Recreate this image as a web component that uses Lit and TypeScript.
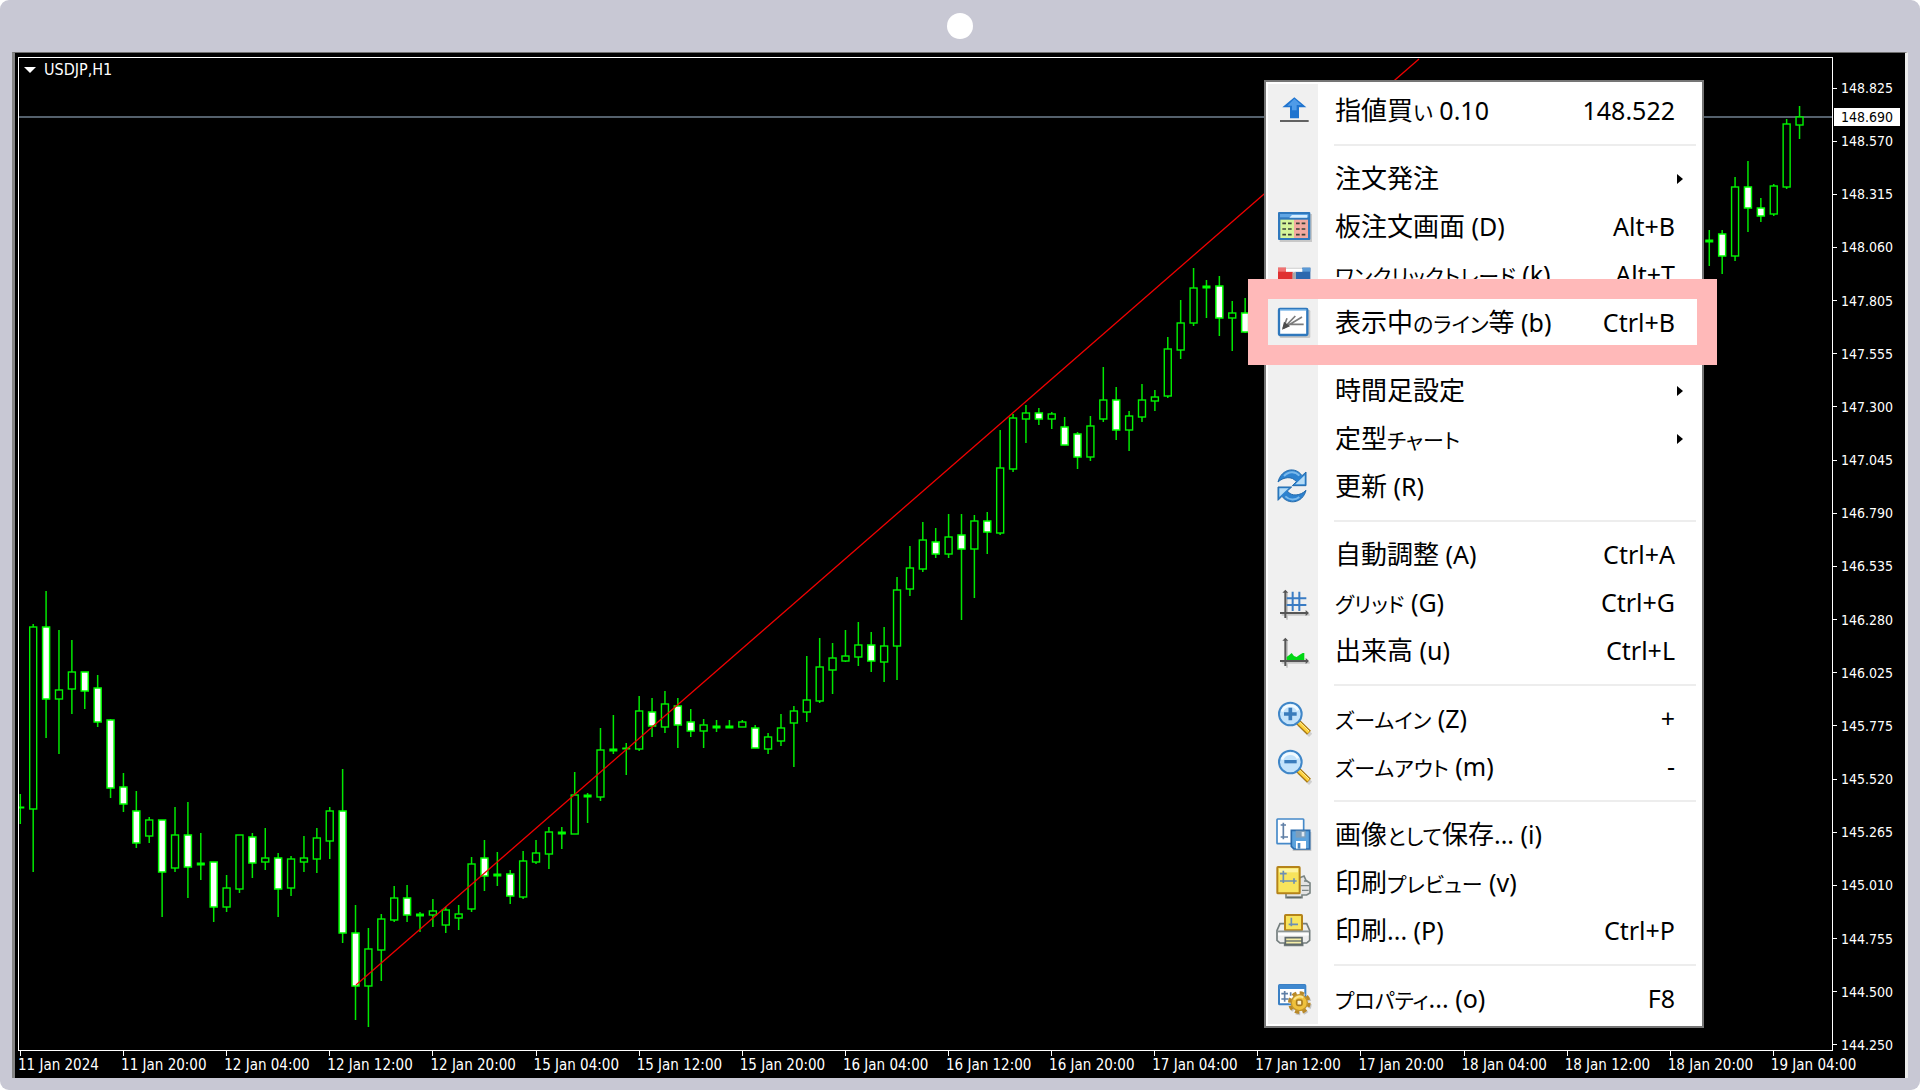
import { LitElement, html, svg, css, nothing, type TemplateResult, type SVGTemplateResult } from "lit";
import { customElement } from "lit/decorators.js";

/* One bar: high, body top, body bottom, low, kind ("u" rising, "d" falling, "f" flat). */
type Bar = [number, number, number, number, "u" | "d" | "f"];

const FIRST_X = 20.3;
const STEP = 12.893;

const LEFT_BARS: Bar[] = [
  [794, 807, 807, 824, "f"], [624, 627, 809, 872, "u"], [591, 627, 699, 738, "d"], [630, 690, 699, 754, "u"],
  [640, 672, 689, 714, "u"], [672, 672, 691, 709, "d"], [675, 688, 722, 727, "d"], [719, 720, 788, 798, "d"],
  [773, 787, 804, 812, "d"], [791, 811, 843, 848, "d"], [817, 820, 836, 843, "u"], [820, 820, 872, 917, "d"],
  [807, 835, 868, 872, "u"], [802, 835, 867, 898, "d"], [833, 863, 865, 880, "f"], [862, 862, 907, 922, "d"],
  [875, 888, 907, 912, "u"], [835, 835, 889, 893, "u"], [833, 837, 863, 878, "d"], [828, 858, 862, 870, "u"],
  [853, 858, 889, 917, "d"], [856, 859, 888, 896, "u"], [836, 858, 862, 872, "u"], [828, 838, 859, 873, "u"],
  [807, 811, 841, 859, "u"], [769, 811, 933, 943, "d"], [905, 933, 986, 1020, "d"], [928, 949, 986, 1027, "u"],
  [914, 919, 950, 981, "u"], [886, 898, 920, 922, "u"], [885, 898, 915, 922, "d"], [912, 914, 916, 932, "f"],
  [899, 911, 915, 927, "u"], [907, 910, 925, 933, "u"], [905, 914, 918, 930, "u"], [857, 864, 909, 912, "u"],
  [840, 858, 876, 891, "d"], [852, 874, 876, 886, "f"], [870, 874, 896, 904, "d"], [851, 861, 897, 899, "u"],
  [840, 853, 862, 864, "u"], [827, 832, 854, 869, "u"], [827, 832, 834, 849, "f"], [772, 795, 834, 834, "u"],
  [793, 795, 797, 823, "f"], [728, 750, 797, 801, "u"], [715, 749, 751, 754, "f"], [743, 748, 748, 775, "f"],
  [696, 711, 749, 751, "u"], [698, 712, 726, 737, "d"], [691, 704, 727, 733, "u"], [698, 706, 725, 748, "d"],
  [709, 722, 731, 737, "d"], [719, 725, 731, 748, "u"], [720, 726, 728, 732, "f"], [720, 726, 728, 728, "f"],
  [720, 722, 727, 727, "u"], [725, 728, 748, 748, "d"], [733, 737, 749, 754, "u"], [714, 728, 741, 746, "u"],
  [706, 711, 723, 767, "u"], [656, 700, 712, 722, "u"], [638, 667, 701, 703, "u"], [643, 658, 670, 694, "u"],
  [630, 656, 661, 662, "u"], [622, 645, 657, 666, "u"], [632, 645, 661, 672, "d"], [627, 646, 662, 682, "u"],
  [577, 590, 646, 680, "u"], [546, 568, 589, 596, "u"], [522, 540, 569, 572, "u"], [528, 542, 554, 558, "d"],
  [514, 537, 554, 558, "u"], [514, 535, 549, 620, "d"], [515, 521, 549, 598, "u"], [512, 521, 532, 554, "d"],
  [430, 468, 533, 535, "u"], [414, 418, 469, 472, "u"], [405, 413, 419, 443, "u"], [408, 413, 419, 425, "d"],
  [412, 414, 419, 429, "u"], [417, 427, 445, 445, "d"], [432, 434, 457, 469, "d"], [416, 426, 457, 461, "u"],
  [367, 400, 419, 422, "u"], [387, 400, 430, 440, "d"], [411, 416, 430, 451, "u"], [384, 400, 417, 422, "u"],
  [390, 397, 401, 411, "u"], [337, 349, 396, 398, "u"], [300, 323, 350, 359, "u"], [268, 288, 323, 326, "u"],
  [280, 286, 288, 318, "f"], [276, 286, 318, 336, "d"], [301, 313, 318, 351, "u"], [298, 313, 332, 333, "d"],
];

const RIGHT_START = 131;
const RIGHT_BARS: Bar[] = [
  [230, 240, 242, 266, "f"], [230, 234, 256, 274, "d"], [177, 187, 256, 261, "u"], [161, 187, 208, 232, "d"],
  [198, 208, 216, 222, "d"], [184, 186, 214, 216, "u"], [119, 124, 187, 189, "u"], [106, 117, 125, 139, "u"],
];

const PRICES = [
  "148.825", "148.570", "148.315", "148.060", "147.805", "147.555", "147.300", "147.045", "146.790", "146.535",
  "146.280", "146.025", "145.775", "145.520", "145.265", "145.010", "144.755", "144.500", "144.250",
];

const TIMES = [
  "11 Jan 2024", "11 Jan 20:00", "12 Jan 04:00", "12 Jan 12:00", "12 Jan 20:00", "15 Jan 04:00",
  "15 Jan 12:00", "15 Jan 20:00", "16 Jan 04:00", "16 Jan 12:00", "16 Jan 20:00", "17 Jan 04:00",
  "17 Jan 12:00", "17 Jan 20:00", "18 Jan 04:00", "18 Jan 12:00", "18 Jan 20:00", "19 Jan 04:00",
];

/* Icons are drawn on a 108-unit square, three units to a pixel. */
const chartAxes = svg`
  <g stroke="#c9c9c9" stroke-width="6" fill="none" transform="translate(5 5)"><path d="M28 18V99M12 84H96"/></g>
  <path d="M28 18V99M12 84H94" stroke="#565656" stroke-width="6" fill="none"/>
  <path d="M28 14l-9 9h18zM99 84l-10-9v18z" fill="#565656"/>`;

const lens = svg`
  <path d="M70 70L104 103" stroke="#cfcfcf" stroke-width="14"/>
  <path d="M66 63L99 95" stroke="#a8770f" stroke-width="17"/>
  <path d="M67 64L98 94" stroke="#ffd23c" stroke-width="9"/>
  <path d="M70 62L99 90" stroke="#fff0a0" stroke-width="3"/>
  <circle cx="43" cy="39" r="34" fill="#c4e3fb" stroke="#3f86c8" stroke-width="6"/>
  <path d="M18 32a26 26 0 0 1 48-4" fill="none" stroke="#f1faff" stroke-width="8"/>`;

const icons: Record<string, SVGTemplateResult> = {
  up: svg`
    <path d="M55 13L91 43H69V76H42V43H19Z" fill="#1f74cf"/>
    <path d="M55 17L76 36H62V52H48V38H34Z" fill="#4f9be8"/>
    <path d="M12 84H98" stroke="#454545" stroke-width="5"/>`,
  board: svg`
    <rect x="11" y="15" width="97" height="84" fill="#c8c8c8"/>
    <rect x="6" y="9" width="97" height="84" rx="3" fill="#2f78bd"/>
    <path d="M12 15H97V25H12Z" fill="#5fa5e4"/><path d="M48 18H94V26H40Z" fill="#d8efff"/>
    <path d="M13 32H54V87H13Z" fill="#d6f59a"/><path d="M54 32H96V87H54Z" fill="#f3a9a0"/>
    <path d="M19 43h32M19 60h32M19 77h32M60 43h32M60 60h32M60 77h32" stroke="#3c4238" stroke-width="5" stroke-dasharray="11 6"/>`,
  oneclick: svg`
    <rect x="6" y="32" width="97" height="54" fill="#d9d9d9"/>
    <path d="M6 32H30V44H50V80H6Z" fill="#e03030"/><path d="M6 32H30V44H6Z" fill="#ef7272"/>
    <path d="M79 32H103V80H59V44H79Z" fill="#2d68ae"/><path d="M79 32H103V44H79Z" fill="#5b9ad6"/>
    <path d="M30 36H79V44H30Z" fill="#fff"/><path d="M50 48L59 44V80H50Z" fill="#a8a8a8"/>`,
  objects: svg`
    <rect x="11" y="15" width="92" height="84" rx="4" fill="#c8c8c8"/>
    <rect x="9" y="12" width="85" height="78" rx="3" fill="#fff" stroke="#2f78bd" stroke-width="7"/>
    <path d="M12 15H91" stroke="#8cc3f2" stroke-width="4"/>
    <path d="M22 70L58 33M22 70L78 36M34 58H83M22 70L33 40" stroke="#7c7c7c" stroke-width="5" fill="none"/>
    <path d="M18 74L24 50L42 64Z" fill="#4c4c4c"/>`,
  refresh: svg`
    <path d="M6 39C16 -2 60 -8 78 20L90 9V50H49L61 38C48 20 22 24 6 39Z" fill="#2d82cf" stroke="#236aab" stroke-width="3"/>
    <path d="M86 19V46H58L68 36Z" fill="#b5dcf7"/>
    <path d="M24 21C38 6 58 6 70 20" stroke="#79b9ec" stroke-width="6" fill="none"/>
    <path d="M90 64C80 104 36 108 18 82L6 94V54H47L34 66C46 84 74 80 90 64Z" fill="#2d82cf" stroke="#236aab" stroke-width="3"/>
    <path d="M10 84V58H38L28 67Z" fill="#b5dcf7"/>
    <path d="M28 82C40 94 58 94 70 84" stroke="#79b9ec" stroke-width="6" fill="none"/>`,
  grid: svg`${chartAxes}<path d="M50 20V78M70 20V78M32 40H91M32 60H91" stroke="#3a7cc4" stroke-width="6" fill="none"/>`,
  volume: svg`${chartAxes}<path d="M32 81V72L40 66L47 60L54 69L62 72L70 66L80 60H85V81Z" fill="#00d714"/>`,
  zoomin: svg`${lens}<path d="M43 20V58M24 39H62" stroke="#3a7cbc" stroke-width="11"/>`,
  zoomout: svg`${lens}<path d="M25 38H62" stroke="#3a7cbc" stroke-width="10"/>`,
  save: svg`
    <rect x="3" y="6" width="80" height="74" rx="2" fill="#fff" stroke="#4589c9" stroke-width="5"/>
    <path d="M22 17V67M14 24H30M14 60H36" stroke="#5f7fa6" stroke-width="5"/>
    <path d="M50 45H106V102H50Z" fill="#c6c6c6"/>
    <path d="M46 40H101V96H54L46 88Z" fill="#5da3dd" stroke="#2a6bac" stroke-width="5"/>
    <path d="M59 41H89V62H59Z" fill="#7f9fba"/><path d="M77 45H85V58H77Z" fill="#dfe9f2"/>
    <path d="M60 72H90V95H60Z" fill="#fff"/><path d="M65 78H73V95H65Z" fill="#4a8ac4"/>`,
  preview: svg`
    <path d="M62 42L84 33L90 46L102 54V84L92 90H78V98H30V86Z" fill="#e4e4e4" stroke="#7b8584" stroke-width="5"/>
    <path d="M74 62H101M84 48H94M78 76H98" stroke="#7b8584" stroke-width="4"/>
    <path d="M32 97H76" stroke="#5f696a" stroke-width="5"/>
    <rect x="4" y="6" width="67" height="79" rx="2" fill="#f8e45c" stroke="#b5831a" stroke-width="6"/>
    <path d="M9 11H66V22H9Z" fill="#fdf3a0"/>
    <path d="M22 17V54M12 26H32M12 48H62M54 40V56" stroke="#6c8fb4" stroke-width="5"/>`,
  print: svg`
    <path d="M12 32H92L101 52V82L92 90H80V97H26V90H12L3 82V52Z" fill="#ededed" stroke="#737d7d" stroke-width="5"/>
    <rect x="27" y="6" width="51" height="46" rx="2" fill="#f8e45c" stroke="#b5831a" stroke-width="6"/>
    <path d="M46 14V40M38 34H66" stroke="#6c8fb4" stroke-width="5"/>
    <path d="M4 55H100" stroke="#8d9696" stroke-width="5"/><path d="M6 64H98" stroke="#fff" stroke-width="7"/>
    <path d="M28 74H78V94H28Z" fill="#f4eda8" stroke="#5f696a" stroke-width="5"/>
    <path d="M28 84H78" stroke="#5f696a" stroke-width="4"/>`,
  props: svg`
    <rect x="9" y="12" width="79" height="58" rx="2" fill="#fff" stroke="#3b80c4" stroke-width="6"/>
    <path d="M9 12H88V24H9Z" fill="#3f88cf"/>
    <path d="M26 30V62M16 38H36M16 54H38M44 34V44" stroke="#5f7fa6" stroke-width="5"/>
    <circle cx="73" cy="69" r="29" fill="none" stroke="#c4c4c4" stroke-width="10" stroke-dasharray="13 9.8"/>
    <circle cx="70" cy="65" r="29" fill="none" stroke="#b8892a" stroke-width="10" stroke-dasharray="13 9.8"/>
    <circle cx="70" cy="65" r="24" fill="#efc13c" stroke="#c2942a" stroke-width="4"/>
    <path d="M54 56a20 20 0 0 1 28-6" stroke="#fbe58d" stroke-width="6" fill="none"/>
    <rect x="62" y="57" width="16" height="16" rx="4" fill="#fff3cf" stroke="#a87a1c" stroke-width="5"/>`,
};

interface Item {
  icon?: string;
  text: string;
  keys?: string;
  sub?: boolean;
  marked?: boolean;
}

const GROUPS: Item[][] = [
  [{ icon: "up", text: "指値買い 0.10", keys: "148.522" }],
  [
    { text: "注文発注", sub: true },
    { icon: "board", text: "板注文画面 (D)", keys: "Alt+B" },
    { icon: "oneclick", text: "ワンクリックトレード (k)", keys: "Alt+T" },
    { icon: "objects", text: "表示中のライン等 (b)", keys: "Ctrl+B", marked: true },
  ],
  [
    { text: "時間足設定", sub: true },
    { text: "定型チャート", sub: true },
    { icon: "refresh", text: "更新 (R)" },
  ],
  [
    { text: "自動調整 (A)", keys: "Ctrl+A" },
    { icon: "grid", text: "グリッド (G)", keys: "Ctrl+G" },
    { icon: "volume", text: "出来高 (u)", keys: "Ctrl+L" },
  ],
  [
    { icon: "zoomin", text: "ズームイン (Z)", keys: "+" },
    { icon: "zoomout", text: "ズームアウト (m)", keys: "-" },
  ],
  [
    { icon: "save", text: "画像として保存... (i)" },
    { icon: "preview", text: "印刷プレビュー (v)" },
    { icon: "print", text: "印刷... (P)", keys: "Ctrl+P" },
  ],
  [{ icon: "props", text: "プロパティ... (o)", keys: "F8" }],
];

@customElement("price-chart")
class PriceChart extends LitElement {
  static styles = css`
    :host { display: block; min-width: 0; min-height: 0; position: relative; }
    .canvas { position: absolute; inset: 0; width: 100%; height: 100%; display: block; }
    .wick { stroke: #00e800; stroke-width: 1.5; }
    .up { fill: #000; stroke: #00f400; stroke-width: 1.4; }
    .down { fill: #fff; stroke: #00ff00; stroke-width: 1.5; }
    .flat { fill: #00ff00; stroke: #00ff00; stroke-width: 1; }
    .bid { stroke: #708090; stroke-width: 1.3; }
    .trend { stroke: #f00000; stroke-width: 1.3; }
  `;

  private bar([high, top, bottom, low, kind]: Bar, index: number) {
    const x = FIRST_X + STEP * index;
    const cls = kind === "u" ? "up" : kind === "d" ? "down" : "flat";
    return svg`
      <line class="wick" x1=${x} x2=${x} y1=${high} y2=${low} />
      <rect class=${cls} x=${x - 3.5} y=${top} width="7" height=${Math.max(1, bottom - top)} />`;
  }

  render() {
    return html`
      <svg class="canvas" viewBox="19 58 1813 992" preserveAspectRatio="none" role="img" aria-label="USDJP H1">
        <line class="bid" x1="19" x2="1832" y1="117" y2="117" />
        ${LEFT_BARS.map((b, i) => this.bar(b, i))}
        ${RIGHT_BARS.map((b, i) => this.bar(b, RIGHT_START + i))}
        <line class="trend" x1="356" y1="985" x2="1419" y2="59" />
      </svg>`;
  }
}

@customElement("context-menu")
class ContextMenu extends LitElement {
  static styles = css`
    :host {
      display: block;
      box-sizing: border-box;
      width: 440px;
      padding: 2px;
      border: 2px solid #757575;
      background: #fff;
      color: #000;
      font-family: "Noto Sans", "Noto Sans CJK JP", sans-serif;
      font-size: 25px;
      line-height: 46px;
    }
    .list { padding: 3px 0 1px; background: linear-gradient(to right, #f0f0f0 50px, #fff 50px); }
    .item {
      position: relative;
      display: grid;
      grid-template-columns: 50px 1fr auto;
      align-items: center;
      width: 100%;
      height: 48px;
      margin: 0;
      padding: 0;
      border: 0;
      background: none;
      color: inherit;
      font: inherit;
      text-align: left;
      white-space: nowrap;
    }
    .icon { width: 36px; height: 36px; margin-left: 8px; display: block; }
    .label { grid-column: 2; height: 48px; padding-left: 17px; }
    .kanji { font-family: "Noto Sans CJK JP", sans-serif; font-size: 26px; line-height: 1; }
    .kana { font-family: "Noto Sans CJK JP", sans-serif; font-size: 21px; line-height: 1; font-feature-settings: "palt"; }
    .keys { height: 48px; padding-right: 25px; }
    .arrow { margin-right: 17px; border: 5px solid transparent; border-left: 6px solid #000; border-right: 0; }
    .marked::after {
      content: "";
      position: absolute;
      inset: -20px -17px -18px -20px;
      z-index: 1;
      border: 20px solid #ffb9b9;
      pointer-events: none;
    }
    .rule { height: 2px; margin: 9px 4px 9px 66px; border: 0; background: #ededed; }
  `;

  private label(text: string): TemplateResult[] {
    const runs = text.match(/[\u3040-\u30ff]+|[\u4e00-\u9fff]+|[^\u3040-\u30ff\u4e00-\u9fff]+/g) ?? [];
    return runs.map((run) =>
      /^[\u3040-\u30ff]/.test(run)
        ? html`<span class="kana">${run}</span>`
        : /^[\u4e00-\u9fff]/.test(run)
          ? html`<span class="kanji">${run}</span>`
          : html`${run}`,
    );
  }

  private item(item: Item) {
    return html`<button class="item ${item.marked ? "marked" : ""}" type="button" role="menuitem">
      ${item.icon ? html`<svg class="icon" viewBox="0 0 108 108" aria-hidden="true">${icons[item.icon]}</svg>` : nothing}
      <span class="label">${this.label(item.text)}</span>
      ${item.keys ? html`<span class="keys">${item.keys}</span>` : nothing}
      ${item.sub ? html`<span class="arrow"></span>` : nothing}
    </button>`;
  }

  render() {
    return html`<div class="list" role="menu" lang="ja">
      ${GROUPS.map((group, i) => html`${i > 0 ? html`<hr class="rule" />` : nothing}${group.map((it) => this.item(it))}`)}
    </div>`;
  }
}

@customElement("app-root")
class AppRoot extends LitElement {
  static styles = css`
    :host {
      display: block;
      background: #fff;
      color: #fff;
      font-family: "DejaVu Sans Condensed", "Noto Sans", sans-serif;
      font-size: 14px;
      line-height: 18px;
    }
    .frame {
      box-sizing: border-box;
      min-height: 100vh;
      display: flex;
      flex-direction: column;
      padding: 0 12px 12px;
      border-radius: 9px;
      background: #c8c8d4;
    }
    .bezel { height: 52px; display: flex; align-items: center; justify-content: center; }
    .camera { width: 26px; height: 26px; border-radius: 50%; background: #fff; }
    .screen {
      flex: 1;
      display: grid;
      grid-template-columns: 1fr 72px;
      grid-template-rows: 1fr 27px;
      padding: 4px 0 0 3px;
      border: solid #6e6e6e;
      border-width: 1px 3px 0 3px;
      border-left-color: #858585;
      border-right-color: #ececec;
      background: #000;
    }
    .plot { grid-area: 1 / 1; display: grid; position: relative; border: 1px solid #fff; }
    .plot > * { grid-area: 1 / 1; }
    .symbol {
      justify-self: start;
      align-self: start;
      z-index: 1;
      display: flex;
      align-items: center;
      gap: 8px;
      margin: 3px 0 0 5px;
      padding: 0;
      border: 0;
      background: none;
      color: inherit;
      font: inherit;
      font-size: 16px;
    }
    .caret { border: 6px solid transparent; border-top: 6px solid #fff; border-bottom: 0; }
    .menu { position: absolute; top: 22px; right: 128px; z-index: 2; }
    .prices {
      grid-area: 1 / 2 / 3 / 3;
      position: relative;
      display: flex;
      flex-direction: column;
      justify-content: space-between;
      padding: 22px 0 24px;
    }
    .price { display: flex; align-items: center; gap: 4px; }
    .price::before { content: ""; width: 4px; height: 1px; background: #fff; }
    .current { position: absolute; top: 51px; left: 1px; right: 5px; padding-left: 7px; background: #fff; color: #000; }
    .times { grid-area: 2 / 1 / 3 / 3; display: flex; padding-right: 31px; font-size: 15px; }
    .time { flex: 1; min-width: 0; white-space: nowrap; }
    .time::before { content: ""; display: block; width: 1px; height: 5px; margin-left: 2px; background: #fff; }
  `;

  render() {
    return html`
      <main class="frame">
        <div class="bezel"><span class="camera"></span></div>
        <section class="screen">
          <div class="plot">
            <price-chart></price-chart>
            <button class="symbol" type="button"><span class="caret"></span>USDJP,H1</button>
            <context-menu class="menu"></context-menu>
          </div>
          <div class="prices">
            ${PRICES.map((p) => html`<span class="price">${p}</span>`)}
            <span class="current">148.690</span>
          </div>
          <div class="times">${TIMES.map((t) => html`<span class="time">${t}</span>`)}</div>
        </section>
      </main>`;
  }
}
